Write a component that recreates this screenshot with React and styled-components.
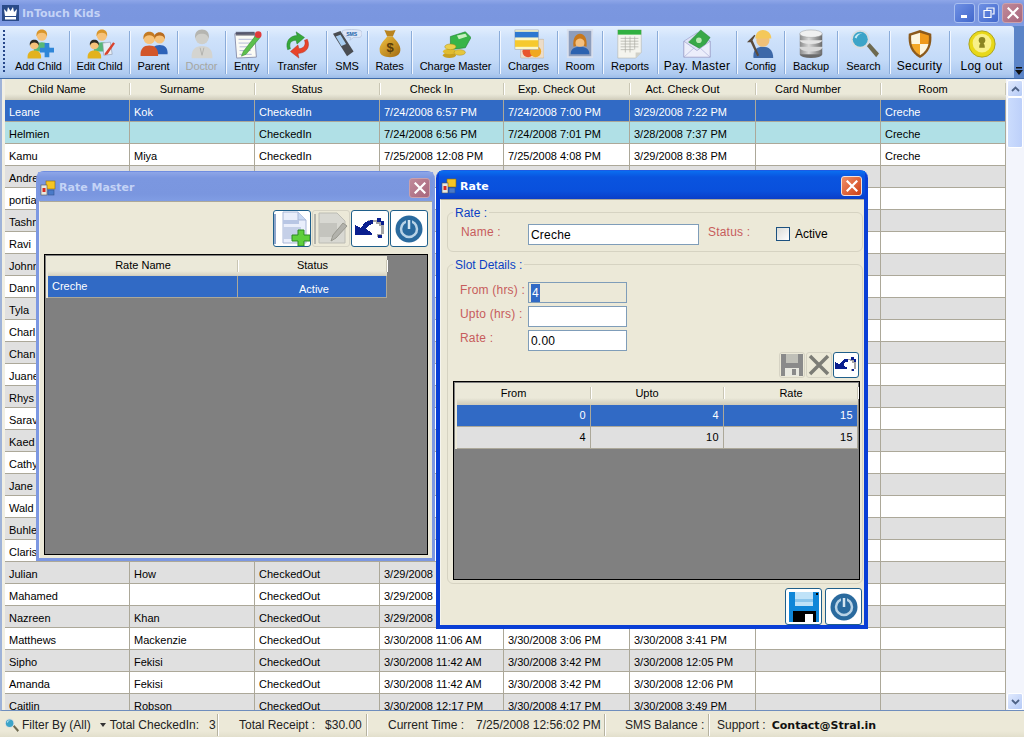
import React from 'react';
import styled, { createGlobalStyle } from 'styled-components';

const GlobalStyle = createGlobalStyle`
  html, body { margin: 0; padding: 0; background: #ece9d8; }
  * { box-sizing: border-box; }
  body { font-family: "Liberation Sans", Arial, sans-serif; font-size: 11px; color: #000; }
`;

const Screen = styled.div`
  position: relative;
  width: 1024px;
  height: 737px;
  overflow: hidden;
  display: flex;
  flex-direction: column;
  background: #dfe8f6;
`;

const TitleBar = styled.div`
  height: 26px;
  flex: none;
  display: flex;
  align-items: center;
  padding: 0 1px 0 2px;
  gap: 3px;
  background: linear-gradient(#8ea6e8 0, #7b97e0 5px, #7a96df 20px, #809de4 100%);
`;

const TitleText = styled.div`
  flex: 1;
  font-family: "DejaVu Sans", Verdana, sans-serif;
  font-weight: bold;
  font-size: 11px;
  color: ${p => (p.$active ? '#fff' : '#c4d3f6')};
`;

const CaptionButton = styled.div`
  width: 21px;
  height: 20px;
  flex: none;
  border: 1px solid ${p => (p.$close ? '#c9a0ac' : '#a9bff0')};
  border-radius: 3px;
  display: flex;
  align-items: center;
  justify-content: center;
  background: ${p => (p.$close ? 'linear-gradient(135deg,#c08a9a,#a8667c)' : 'linear-gradient(135deg,#6f90e4,#4268cc)')};
`;

const RedClose = styled(CaptionButton)`
  border-color: #f4e0d8;
  background: linear-gradient(135deg, #ef8f68, #cf3f14);
`;

const Toolbar = styled.div`
  height: 53px;
  flex: none;
  display: flex;
  background: #5b84c8;
  border-bottom: 1px solid #3f6ba8;
`;

const ToolStrip = styled.div`
  width: 1014px;
  display: flex;
  padding-left: 8px;
  position: relative;
  background: linear-gradient(#e3effe 0, #cfe2fb 12px, #c3daf8 34px, #aecaf0 48px, #9dbce8 100%);
  border-top-right-radius: 3px;
`;

const Grip = styled.div`
  width: 2px;
  margin: 4px 3px 5px -5px;
  background: repeating-linear-gradient(#27478a 0 2px, transparent 2px 4px);
`;

const ToolButton = styled.div`
  width: ${p => p.$w}px;
  height: 43px;
  margin-top: 5px;
  flex: none;
  display: flex;
  flex-direction: column;
  align-items: center;
  color: ${p => (p.$off ? '#a6a6a0' : '#000')};
  font-size: ${p => (p.$big ? 12 : 11)}px;
  letter-spacing: ${p => (p.$big ? '0.3px' : '-0.1px')};
  white-space: nowrap;
  border-right: 1px solid #8bacd9;
  box-shadow: 1px 0 0 #f2f7ff;
  & > svg { margin-top: -2px; flex: none; }
  & > span { line-height: 14px; }
`;

const LastTool = styled(ToolButton)`
  border-right: 0;
  box-shadow: none;
`;

const Chevron = styled.div`
  flex: 1;
  display: flex;
  flex-direction: column;
  align-items: center;
  justify-content: flex-end;
  padding-bottom: 2px;
`;

const Main = styled.div`
  flex: 1;
  min-height: 0;
  display: flex;
  padding-left: 3px;
  border-left: 2px solid #9fb3d8;
  background: #f1efe4;
  border-bottom: 1px solid #6f8ebd;
`;

const GridArea = styled.div`
  width: 1001px;
  overflow: hidden;
  background: #fff;
`;

const ROW_COLS = '125px 125px 125px 124px 126px 126px 125px 125px';

const HeadRow = styled.div`
  display: grid;
  width: fit-content;
  grid-template-columns: ${p => p.$cols};
  height: ${p => p.$h}px;
  background: linear-gradient(#ebe9d9 0, #ebe9d9 15px, #d9d6c6 19px, #cfcbb9 100%);
`;

const HeadCell = styled.div`
  height: 17px;
  line-height: ${p => p.$lh || 20}px;
  text-align: center;
  padding-right: ${p => p.$pad || 0}px;
  position: relative;
  &::after {
    content: '';
    position: absolute;
    right: 0;
    top: 4px;
    bottom: 1px;
    width: 1px;
    background: #c9c6b4;
    box-shadow: 1px 0 0 #fff;
  }
`;

const Row = styled.div`
  display: grid;
  width: fit-content;
  grid-template-columns: ${p => p.$cols};
  height: ${p => p.$h || 22}px;
  background: ${p => ({ sel: '#316ac5', aqua: '#b0e0e6', gray: '#e0e0e0', white: '#fff' }[p.$kind])};
  color: ${p => (p.$kind === 'sel' ? '#fff' : '#000')};
`;

const Cell = styled.div`
  border-right: 1px solid #aca899;
  border-bottom: 1px solid #aca899;
  padding: ${p => p.$pt ?? 3}px ${p => (p.$right ? 4 : 0)}px 0 ${p => (p.$right ? 0 : 4)}px;
  line-height: 19px;
  white-space: nowrap;
  overflow: hidden;
  text-align: ${p => (p.$right ? 'right' : p.$center ? 'center' : 'left')};
  letter-spacing: ${p => (p.$right ? '0.4px' : '0')};
`;

const Scrollbar = styled.div`
  flex: 1;
  display: flex;
  flex-direction: column;
  padding: 1px 1px 0;
  background: #f3f5fc;
`;

const ScrollButton = styled.div`
  height: 17px;
  flex: none;
  border: 1px solid #fff;
  border-radius: 2px;
  background: linear-gradient(135deg, #e1eafe, #b5caf6);
  display: flex;
  align-items: center;
  justify-content: center;
`;

const ScrollThumb = styled.div`
  height: 51px;
  flex: none;
  border: 1px solid #fff;
  border-radius: 2px;
  background: linear-gradient(90deg, #cbdcfd, #bdd0fa);
`;

const ScrollTrack = styled.div`
  flex: 1;
`;

const StatusBar = styled.div`
  height: 26px;
  flex: none;
  display: flex;
  align-items: center;
  padding-top: 2px;
  background: linear-gradient(#ece9d8 0, #ece9d8 20px, #e2dfcc 100%);
  font-size: 12px;
  color: #222;
  white-space: nowrap;
`;

const StatusItem = styled.div`
  width: ${p => p.$w}px;
  height: 22px;
  flex: none;
  display: flex;
  align-items: center;
  padding-left: ${p => p.$pad || 0}px;
  gap: ${p => p.$gap || 0}px;
  border-right: ${p => (p.$open ? '0' : '1px solid #b5b2a0')};
  box-shadow: ${p => (p.$open ? 'none' : '1px 0 0 #fff')};
`;

const FilterLabel = styled.span`
  margin-left: 3px;
`;

const FilterArrow = styled.svg`
  flex: none;
  margin: 0 4px 0 9px;
`;

const CheckedInCount = styled.span`
  margin-left: 10px;
`;

const ContactText = styled.b`
  font-family: "DejaVu Sans", Verdana, sans-serif;
  font-size: 11px;
  color: #111;
`;

const Win = styled.div`
  position: absolute;
  display: flex;
  flex-direction: column;
  border-radius: 8px 8px 0 0;
`;

const MasterWin = styled(Win)`
  left: 36px;
  top: 171px;
  width: 399px;
  height: 390px;
  padding: 0 3px 3px;
  background: #7d98e2;
  border-top: 1px solid #6f8de0;
`;

const RateWin = styled(Win)`
  left: 436px;
  top: 170px;
  width: 432px;
  height: 459px;
  padding: 0 4px 4px 4px;
  background: #0a3fd6;
  border-top: 1px solid #1a5ce6;
`;

const WinTitle = styled.div`
  height: ${p => p.$h}px;
  flex: none;
  display: flex;
  align-items: center;
  gap: 3px;
  padding: 2px 3px 0 2px;
  margin: 0 -1px;
  background: ${p => (p.$active
    ? 'linear-gradient(#0a6ef0 0, #0a54df 6px, #0950dc 20px, #0a3ec8 100%)'
    : 'linear-gradient(#8ea6e8 0, #7b97e0 6px, #7a96df 22px, #809de4 100%)')};
`;

const WinBody = styled.div`
  flex: 1;
  min-height: 0;
  display: flex;
  flex-direction: column;
  background: #ece9d8;
  border-top: 1px solid #aca899;
  border-left: 1px solid #f6f5ee;
`;

const ButtonRow = styled.div`
  display: flex;
  justify-content: flex-end;
  gap: ${p => p.$gap}px;
  margin: ${p => p.$m};
`;

const IconButton = styled.div`
  width: ${p => p.$w || 38}px;
  height: ${p => p.$h || 37}px;
  flex: none;
  display: flex;
  align-items: center;
  justify-content: center;
  border-radius: 3px;
  background: ${p => (p.$off ? '#ece9d8' : '#fff')};
  border: 1px solid ${p => (p.$off ? '#d6d3c4' : '#1f5f8b')};
`;

const DataGrid = styled.div`
  display: flex;
  flex-direction: column;
  background: #808080;
  border: 1px solid #000;
  padding: 1px 0 0 ${p => p.$left}px;
  margin: ${p => p.$m};
  height: ${p => p.$h}px;
  width: ${p => p.$w}px;
  flex: none;
  & > div { box-shadow: -2px 0 0 #ece9d8; }
`;

const Group = styled.div`
  position: relative;
  margin: ${p => p.$m};
  height: ${p => p.$h}px;
  flex: none;
  border: 1.5px solid #d6d3c2;
  border-radius: 6px;
`;

const Legend = styled.div`
  position: absolute;
  top: -7px;
  left: 5px;
  padding: 0 2px;
  background: #ece9d8;
  color: #0a3fc4;
  font-size: 12px;
  line-height: 14px;
`;

const NameRow = styled.div`
  display: grid;
  grid-template-columns: 67px 171px 77px 14px auto;
  align-items: center;
  padding: 10.5px 0 0 13px;
`;

const SlotForm = styled.div`
  display: grid;
  grid-template-columns: 67px 99px;
  grid-auto-rows: 21px;
  row-gap: 3px;
  align-items: center;
  padding: 16.5px 0 0 13px;
`;

const FieldLabel = styled.label`
  color: #c75c5c;
  font-size: 12px;
  margin-top: -5px;
  letter-spacing: 0.2px;
`;

const SlotLabel = styled(FieldLabel)`
  margin-left: -1px;
`;

const StatusLabel = styled(FieldLabel)`
  padding-left: 9px;
`;

const Field = styled.div`
  height: 21px;
  border: 1px solid #7f9db9;
  background: ${p => (p.$off ? '#ece9d8' : '#fff')};
  font-size: 12px;
  line-height: 20px;
  padding-left: 2px;
  letter-spacing: 0.2px;
`;

const Selected = styled.span`
  background: #316ac5;
  color: #fff;
  padding: 2px 1px;
`;

const Check = styled.div`
  width: 14px;
  height: 14px;
  border: 1px solid #1c5180;
  background: linear-gradient(135deg, #dcdcd7, #fff);
`;

const CheckText = styled.span`
  padding-left: 5px;
  font-size: 12px;
`;

const Person = ({ x, y, s = 1, shirt, hair, skin = '#f6c27a' }) => (
  <g transform={`translate(${x} ${y}) scale(${s})`}>
    <path d="M-8.5 17c-.5-7 3-10 8.500-10s9 3 8.500 10z" fill={shirt} />
    <circle r="5.500" fill={skin} />
    <path d="M-5.500 1c-1-5 2-7.500 5.500-7.500s6.500 2.500 5.500 7.500c-.8-3-2.800-4-5.500-4s-4.700 1-5.500 4z" fill={hair} />
  </g>
);

const Svg = ({ size = 30, children }) => (
  <svg width={size} height={size} viewBox="0 0 32 32">{children}</svg>
);

const AddChildIcon = () => (
  <Svg>
    <Person x={19} y={7} shirt="#58b878" hair="#d9962c" />
    <Person x={11} y={17} s={0.85} shirt="#e2b21e" hair="#2b2a22" />
    <path d="M22 15h5v5h5v5h-5v5h-5v-5h-5v-5h5z" fill="#2f86d8" />
  </Svg>
);

const EditChildIcon = () => (
  <Svg>
    <Person x={18} y={7} shirt="#58b878" hair="#d9962c" />
    <Person x={10} y={17} s={0.85} shirt="#e2b21e" hair="#2b2a22" />
    <path d="M19 15l8-1 2 13-9 1z" fill="#e8eef5" stroke="#8a94a8" strokeWidth=".6" />
    <path d="M21 26l9-12 2 1.500-8 11.500-3 1z" fill="#d8432e" />
  </Svg>
);

const ParentIcon = () => (
  <Svg>
    <Person x={22} y={10} shirt="#2d62b8" hair="#b86c20" />
    <Person x={11} y={10} s={1.1} shirt="#d2562a" hair="#c47a22" />
  </Svg>
);

const DoctorIcon = () => (
  <Svg>
    <Person x={16} y={9} s={1.3} shirt="#d4d4d0" hair="#b5b5b0" skin="#cfcfca" />
    <path d="M14 20l2 8 2-8" fill="none" stroke="#b0b0ac" />
  </Svg>
);

const EntryIcon = () => (
  <Svg>
    <path d="M3 5l21-1 2 26-21 1z" fill="#fbfbf5" stroke="#8a90ad" />
    <path d="M7 11h15M7 15h15M8 19h14M8 23h12M8 27h13" stroke="#b0b8d8" />
    <path d="M4 3h20v4h-20z" fill="#3c3c50" opacity=".75" />
    <path d="M12 24l14-18 4 3-15 18-5 2z" fill="#5cc04c" stroke="#2e7a2a" strokeWidth=".5" />
    <circle cx="28" cy="6" r="3.500" fill="#e03a3a" />
  </Svg>
);

const TransferIcon = () => (
  <Svg>
    <path d="M6 22c-3-9 3-15 10-15l-1-4 9 6-8 7-1-4c-5 0-8 3-6 9z" fill="#36a83a" stroke="#1f7a2b" strokeWidth=".5" />
    <path d="M27 11c4 9-2 15-10 15l1 5-9-7 8-7 1 4c5 0 8-4 6-9z" fill="#e8432a" stroke="#b02a18" strokeWidth=".5" />
  </Svg>
);

const SmsIcon = () => (
  <Svg>
    <path d="M1 5l8-3 14 22-7 5z" fill="#4a4d52" />
    <path d="M4 8l5-2 6 10-5 2z" fill="#a8cdf0" />
    <path d="M11 2c3-2 17-2 20 0 2 2 1 7-2 7h-6l-4 3 1-3c-5 0-10-3-9-7z" fill="#dfe7f7" stroke="#9fb0d0" strokeWidth=".5" />
    <text x="21" y="7" textAnchor="middle" fontSize="5.500" fontWeight="bold" fill="#2262a8" fontFamily="Liberation Sans">SMS</text>
  </Svg>
);

const RatesIcon = () => (
  <Svg>
    <path d="M10 1c3 1 8 1 12 0l-3 7h-6z" fill="#b98420" />
    <path d="M13 8h6c3 4 9 9 8 15-.5 5-5 7-11 7s-11-2-11-7c-1-6 5-11 8-15z" fill="url(#gold)" />
    <text x="16" y="25" textAnchor="middle" fontSize="14" fontWeight="bold" fill="#5a3c08" fontFamily="Liberation Sans">$</text>
  </Svg>
);

const ChargeMasterIcon = () => (
  <Svg>
    <path d="M10 8l16-5 6 6-6 11-16 2z" fill="#38b448" stroke="#1c7a2c" strokeWidth=".6" />
    <path d="M17 7l9-2 2 3-9 3z" fill="#c8f0c0" />
    <ellipse cx="9" cy="28" rx="7" ry="3" fill="#c8a020" />
    <ellipse cx="9" cy="24" rx="7" ry="3" fill="#e0bc30" />
    <ellipse cx="10" cy="19" rx="6" ry="3" fill="#eccf4a" stroke="#a88a18" strokeWidth=".5" />
    <ellipse cx="20" cy="25" rx="6" ry="3" fill="#e6c63c" stroke="#a88a18" strokeWidth=".5" />
  </Svg>
);

const ChargesIcon = () => (
  <Svg>
    <rect x="7" y="11" width="25" height="20" rx="1" fill="#ecdcc8" stroke="#b8a890" strokeWidth=".5" />
    <circle cx="15" cy="24" r="6" fill="#e8562c" />
    <circle cx="23" cy="24" r="6" fill="#f0a820" />
    <rect x="1" y="1" width="25" height="21" fill="#fbf6c8" stroke="#8a94b0" strokeWidth=".5" />
    <rect x="1" y="3" width="25" height="6" fill="#2e78d0" />
    <rect x="1" y="12" width="25" height="7" fill="#f6c92e" />
  </Svg>
);

const RoomIcon = () => (
  <Svg>
    <rect x="3" y="1" width="26" height="29" fill="#8d9dbc" stroke="#d8dfee" strokeWidth="2" />
    <path d="M6 27c0-6 4-8 10-8s10 2 10 8z" fill="#2c62b0" />
    <circle cx="16" cy="13" r="6" fill="#f4c080" />
    <path d="M9 19c-1-10 3-14 7-14s8 4 7 14l-3-1c2-4 0-8-4-8s-6 4-4 8z" fill="#c8781c" />
  </Svg>
);

const ReportsIcon = () => (
  <Svg>
    <path d="M3 1h25v24l-6 6H3z" fill="#f4f4ee" stroke="#b0b0a8" strokeWidth=".6" />
    <rect x="3" y="1" width="25" height="5" fill="#30b040" />
    <path d="M6 10h19M6 13h19M6 16h19M6 19h19M6 22h14M11 8v17M16 8v17M21 8v14" stroke="#a8a8a0" strokeWidth=".7" />
    <path d="M28 25l-6 6v-6z" fill="#d0d0c8" />
  </Svg>
);

const PayMasterIcon = () => (
  <Svg>
    <path d="M2 13l14-9 14 9v17H2z" fill="#dfe2f6" stroke="#8e93c0" strokeWidth=".6" />
    <path d="M7 14L20 1l10 8-9 13z" fill="#38a848" stroke="#1c7a2c" strokeWidth=".5" />
    <circle cx="18" cy="12" r="3" fill="#b8e8b0" />
    <path d="M2 13l14 10 14-10v17H2z" fill="#eceefb" stroke="#8e93c0" strokeWidth=".6" />
    <path d="M2 30l11-10M30 30L19 20" stroke="#a8acd4" strokeWidth=".7" />
  </Svg>
);

const ConfigIcon = () => (
  <Svg>
    <path d="M8 31c-1-9 4-12 10-12s11 3 11 12z" fill="#3d68a8" />
    <circle cx="18" cy="12" r="7" fill="#f0c078" />
    <path d="M10 10c0-6 4-9 8-9s9 3 9 9z" fill="#f4c85a" />
    <path d="M1 14l8-8 1 1-3 5 7 16-2 1-7-15z" fill="#5a4a3a" />
  </Svg>
);

const BackupIcon = () => (
  <Svg>
    <ellipse cx="16" cy="27" rx="12" ry="4" fill="#6a6a6a" />
    <rect x="4" y="20" width="24" height="7" fill="url(#silver)" />
    <ellipse cx="16" cy="20" rx="12" ry="4" fill="#d8d8d8" />
    <rect x="4" y="12" width="24" height="7" fill="url(#silver)" />
    <ellipse cx="16" cy="12" rx="12" ry="4" fill="#e4e4e4" />
    <rect x="4" y="5" width="24" height="7" fill="url(#silver)" />
    <ellipse cx="16" cy="5" rx="12" ry="4" fill="#f0f0f0" stroke="#9a9a9a" strokeWidth=".5" />
  </Svg>
);

const SearchGlass = ({ size }) => (
  <Svg size={size}>
    <path d="M19 18l3-3 10 11-3 4z" fill="#6e6a50" />
    <circle cx="12" cy="11" r="10" fill="#d8dde0" />
    <circle cx="12" cy="11" r="8" fill="#3ca4c8" />
    <path d="M6 9c1-3 4-5 8-4-3 0-5 2-6 5z" fill="#c8ecf6" />
  </Svg>
);

const SecurityIcon = () => (
  <Svg>
    <path d="M16 1l12 4c1 12-2 20-12 26C6 25 3 17 4 5z" fill="#8c5a1c" />
    <path d="M16 4v12H7c-.5-3-.6-6-.5-9z" fill="#fdf6e0" />
    <path d="M16 4l9.500 3c.1 3 0 6-.5 9h-9z" fill="#f09a1c" />
    <path d="M7 16h9v12c-5-3-8-7-9-12z" fill="#f4a828" />
    <path d="M16 16h9c-1 5-4 9-9 12z" fill="#fdf6e0" />
  </Svg>
);

const LogoutIcon = () => (
  <Svg>
    <circle cx="16" cy="16" r="14" fill="#e8d818" stroke="#a8a020" />
    <circle cx="16" cy="15" r="10" fill="#f8f088" />
    <circle cx="16" cy="12" r="3.500" fill="#8a8420" />
    <path d="M13 20c0-3 1-6 3-6s3 3 3 6z" fill="#8a8420" />
  </Svg>
);

const AppSquares = () => (
  <svg width="16" height="16" viewBox="0 0 16 16">
    <rect x="6" y="1" width="9" height="8" fill="#f6c522" stroke="#8a6a10" strokeWidth=".6" />
    <rect x="1" y="5" width="6" height="10" fill="#e8e8e0" stroke="#555" strokeWidth=".6" />
    <rect x="2.500" y="8" width="3" height="4" fill="#d82a20" />
    <rect x="8" y="10" width="6" height="5" fill="#4a7ac8" stroke="#33558f" strokeWidth=".6" />
  </svg>
);

const Crown = () => (
  <svg width="17" height="16" viewBox="0 0 17 16">
    <rect width="17" height="16" fill="#2a4a88" />
    <path d="M2 4l3 3 1-5 2.500 4L11 2l1 5 3-3-1 7H3z" fill="#fff" />
    <rect x="3" y="12" width="11" height="2.500" fill="#fff" />
  </svg>
);

const XGlyph = () => (
  <svg width="12" height="12" viewBox="0 0 12 12">
    <path d="M1.500 1.500l9 9M10.500 1.500l-9 9" stroke="#fff" strokeWidth="2.200" strokeLinecap="square" />
  </svg>
);

const MinGlyph = () => (
  <svg width="12" height="12" viewBox="0 0 12 12"><rect x="2" y="8" width="6" height="3" fill="#fff" /></svg>
);

const MaxGlyph = () => (
  <svg width="12" height="12" viewBox="0 0 12 12">
    <path d="M4 3V1h7v6H9M1 3.500h7v7H1z" fill="none" stroke="#fff" strokeWidth="1.200" />
  </svg>
);

const NewDocIcon = () => (
  <svg width="36" height="35" viewBox="0 0 36 35">
    <path d="M9 1h15l8 8v23H9z" fill="#e9eefb" stroke="#a9b8d8" />
    <path d="M24 1v8h8" fill="#c8d8f2" stroke="#a9b8d8" />
    <rect x="9" y="9" width="16" height="4" fill="#b8c6e4" />
    <rect x="9" y="16" width="18" height="12" fill="#c5d0e8" />
    <path d="M1 3v30" stroke="#8ea6cc" strokeWidth="2" />
    <path d="M24 19h6v5h6v6h-6v5h-6v-5h-6v-6h6z" fill="#5fcf3c" stroke="#2c8a22" />
  </svg>
);

const EditDocIcon = () => (
  <svg width="36" height="35" viewBox="0 0 36 35">
    <path d="M6 2h18l8 8v22H6z" fill="#d8d8d2" stroke="#bcbcb4" />
    <rect x="6" y="12" width="18" height="14" fill="#c4c4be" />
    <path d="M2 3v30" stroke="#b5b5ae" strokeWidth="2" />
    <path d="M18 30l2-6 10-12 4 3-11 12z" fill="#b2b2ac" stroke="#98988f" />
  </svg>
);

const UndoIcon = ({ size = 34 }) => (
  <svg width={size} height={size} viewBox="0 0 34 34" shapeRendering="crispEdges">
    <path d="M15 8h11v2h3v2h2v10h-2v3h-5v-3h4v-8h-2v-2h-3v-2H15z" fill="#a5a5a5" />
    <path d="M2 13l6 3c2-4 6-8 12-8v4c-3 0-5 2-7 5l6 4v2H2z" fill="#0a1f8f" />
    <path d="M24 6h4v3h3v4h-3v-3h-4zM25 23h4v3h-4z" fill="#0a1f8f" />
  </svg>
);

const PowerIcon = () => (
  <svg width="28" height="28" viewBox="0 0 28 28">
    <circle cx="14" cy="14" r="13.500" fill="#2a6a9e" />
    <circle cx="14" cy="14" r="8" fill="none" stroke="#b9d3e6" strokeWidth="2.500" />
    <path d="M14 4v10" stroke="#2a6a9e" strokeWidth="6" />
    <path d="M14 5v9" stroke="#d4e5f0" strokeWidth="2.500" />
  </svg>
);

const FloppyIcon = () => (
  <svg width="32" height="32" viewBox="0 0 32 32">
    <path d="M1 1h30v30H1z" fill="#0f86d8" />
    <rect x="7" y="1" width="18" height="14" fill="#bfe2f8" />
    <rect x="7" y="8" width="18" height="3" fill="#8cc6ec" />
    <rect x="28" y="2" width="2" height="2" fill="#000" />
    <rect x="5" y="20" width="23" height="11" fill="#000" />
    <rect x="17" y="23" width="8" height="8" fill="#fff" />
  </svg>
);

const GrayFloppy = () => (
  <svg width="22" height="22" viewBox="0 0 22 22">
    <path d="M0 0h22v22H0z" fill="#8a8a8a" />
    <rect x="5" y="0" width="12" height="9" fill="#c0c0b8" />
    <rect x="4" y="14" width="14" height="8" fill="#e8e8e0" />
    <rect x="11" y="15" width="4" height="6" fill="#8a8a8a" />
  </svg>
);

const GrayX = () => (
  <svg width="24" height="24" viewBox="0 0 24 24">
    <path d="M3 3l18 18M21 3L3 21" stroke="#7c7c76" strokeWidth="3.500" />
  </svg>
);

const Caret = ({ up, color = '#4d6185' }) => (
  <svg width="9" height="6" viewBox="0 0 9 6">
    <path d={up ? 'M1 5l3.500-3.500L8 5' : 'M1 1l3.500 3.500L8 1'} fill="none" stroke={color} strokeWidth="1.800" />
  </svg>
);

const tools = [
  { label: 'Add Child', w: 62, Icon: AddChildIcon },
  { label: 'Edit Child', w: 60, Icon: EditChildIcon },
  { label: 'Parent', w: 48, Icon: ParentIcon },
  { label: 'Doctor', w: 48, Icon: DoctorIcon, off: true },
  { label: 'Entry', w: 42, Icon: EntryIcon },
  { label: 'Transfer', w: 59, Icon: TransferIcon },
  { label: 'SMS', w: 41, Icon: SmsIcon },
  { label: 'Rates', w: 44, Icon: RatesIcon },
  { label: 'Charge Master', w: 88, Icon: ChargeMasterIcon },
  { label: 'Charges', w: 58, Icon: ChargesIcon },
  { label: 'Room', w: 45, Icon: RoomIcon },
  { label: 'Reports', w: 55, Icon: ReportsIcon },
  { label: 'Pay. Master', w: 79, Icon: PayMasterIcon, big: true },
  { label: 'Config', w: 48, Icon: ConfigIcon },
  { label: 'Backup', w: 53, Icon: BackupIcon },
  { label: 'Search', w: 52, Icon: SearchGlass },
  { label: 'Security', w: 60, Icon: SecurityIcon, big: true },
];

const columns = ['Child Name', 'Surname', 'Status', 'Check In', 'Exp. Check Out', 'Act. Check Out', 'Card Number', 'Room'];

const rows = [
  ['Leane', 'Kok', 'CheckedIn', '7/24/2008 6:57 PM', '7/24/2008 7:00 PM', '3/29/2008 7:22 PM', '', 'Creche'],
  ['Helmien', '', 'CheckedIn', '7/24/2008 6:56 PM', '7/24/2008 7:01 PM', '3/28/2008 7:37 PM', '', 'Creche'],
  ['Kamu', 'Miya', 'CheckedIn', '7/25/2008 12:08 PM', '7/25/2008 4:08 PM', '3/29/2008 8:38 PM', '', 'Creche'],
  ...['Andre', 'portia', 'Tashn', 'Ravi', 'Johnn', 'Dann', 'Tyla', 'Charl', 'Chan', 'Juane', 'Rhys', 'Sarav', 'Kaed', 'Cathy', 'Jane', 'Wald', 'Buhle', 'Claris']
    .map(name => [name, '', '', '', '', '', '', '']),
  ['Julian', 'How', 'CheckedOut', '3/29/2008', '', '', '', ''],
  ['Mahamed', '', 'CheckedOut', '3/29/2008', '', '', '', ''],
  ['Nazreen', 'Khan', 'CheckedOut', '3/29/2008', '', '', '', ''],
  ['Matthews', 'Mackenzie', 'CheckedOut', '3/30/2008 11:06 AM', '3/30/2008 3:06 PM', '3/30/2008 3:41 PM', '', ''],
  ['Sipho', 'Fekisi', 'CheckedOut', '3/30/2008 11:42 AM', '3/30/2008 3:42 PM', '3/30/2008 12:05 PM', '', ''],
  ['Amanda', 'Fekisi', 'CheckedOut', '3/30/2008 11:42 AM', '3/30/2008 3:42 PM', '3/30/2008 12:06 PM', '', ''],
  ['Caitlin', 'Robson', 'CheckedOut', '3/30/2008 12:17 PM', '3/30/2008 4:17 PM', '3/30/2008 3:49 PM', '', ''],
];

const rowKind = i => {
  if (i === 0) return 'sel';
  if (i === 1) return 'aqua';
  return i % 2 ? 'gray' : 'white';
};

const MASTER_COLS = '190px 149px';

function RateMaster() {
  return (
    <MasterWin>
      <WinTitle $h={29}>
        <AppSquares />
        <TitleText>Rate Master</TitleText>
        <CaptionButton $close><XGlyph /></CaptionButton>
      </WinTitle>
      <WinBody>
        <ButtonRow $gap={1} $m="8px 4px 7px 0">
          <IconButton><NewDocIcon /></IconButton>
          <IconButton $off><EditDocIcon /></IconButton>
          <IconButton><UndoIcon /></IconButton>
          <IconButton><PowerIcon /></IconButton>
        </ButtonRow>
        <DataGrid $left={3} $m="0 0 0 4px" $w={384} $h={301}>
          <HeadRow $cols={MASTER_COLS} $h={20}>
            <HeadCell $lh={19}>Rate Name</HeadCell>
            <HeadCell $lh={19}>Status</HeadCell>
          </HeadRow>
          <Row $cols={MASTER_COLS} $kind="sel">
            <Cell $pt={1}>Creche</Cell>
            <Cell $center $pt={4}>Active</Cell>
          </Row>
        </DataGrid>
      </WinBody>
    </MasterWin>
  );
}

const slots = [
  { from: 0, upto: 4, rate: 15, kind: 'sel' },
  { from: 4, upto: 10, rate: 15, kind: 'gray' },
];

const SLOT_COLS = '134px 133px 134px';

function RateForm() {
  return (
    <RateWin>
      <WinTitle $active $h={28}>
        <AppSquares />
        <TitleText $active>Rate</TitleText>
        <RedClose><XGlyph /></RedClose>
      </WinTitle>
      <WinBody>
        <Group $m="12px 1px 0 6px" $h={40}>
          <Legend>Rate :</Legend>
          <NameRow>
            <FieldLabel>Name :</FieldLabel>
            <Field>Creche</Field>
            <StatusLabel>Status :</StatusLabel>
            <Check />
            <CheckText>Active</CheckText>
          </NameRow>
        </Group>
        <Group $m="12px 1px 0 6px" $h={320}>
          <Legend>Slot Details :</Legend>
          <SlotForm>
            <SlotLabel>From (hrs) :</SlotLabel>
            <Field $off><Selected>4</Selected></Field>
            <SlotLabel>Upto (hrs) :</SlotLabel>
            <Field />
            <SlotLabel>Rate :</SlotLabel>
            <Field>0.00</Field>
          </SlotForm>
          <ButtonRow $gap={1} $m="1px 3px 3px 0">
            <IconButton $off $w={26} $h={26}><GrayFloppy /></IconButton>
            <IconButton $off $w={26} $h={26}><GrayX /></IconButton>
            <IconButton $w={26} $h={26}><UndoIcon size={24} /></IconButton>
          </ButtonRow>
          <DataGrid $left={3} $m="0 0 0 5px" $w={407} $h={199}>
            <HeadRow $cols={SLOT_COLS} $h={22}>
              <HeadCell $pad={21}>From</HeadCell>
              <HeadCell $pad={21}>Upto</HeadCell>
              <HeadCell>Rate</HeadCell>
            </HeadRow>
            {slots.map(s => (
              <Row key={s.from} $cols={SLOT_COLS} $kind={s.kind}>
                <Cell $right $pt={1}>{s.from}</Cell>
                <Cell $right $pt={1}>{s.upto}</Cell>
                <Cell $right $pt={1}>{s.rate}</Cell>
              </Row>
            ))}
          </DataGrid>
        </Group>
        <ButtonRow $gap={3} $m="4px 2px 0 0">
          <IconButton $w={37}><FloppyIcon /></IconButton>
          <IconButton $w={37}><PowerIcon /></IconButton>
        </ButtonRow>
      </WinBody>
    </RateWin>
  );
}

export default function App() {
  return (
    <Screen>
      <GlobalStyle />
      <svg width="0" height="0" style={{ position: 'absolute' }}>
        <defs>
          <linearGradient id="gold" x1="0" y1="0" x2="1" y2="1">
            <stop offset="0" stopColor="#f0c040" />
            <stop offset="1" stopColor="#a06a10" />
          </linearGradient>
          <linearGradient id="silver" x1="0" y1="0" x2="1" y2="0">
            <stop offset="0" stopColor="#8a8a8a" />
            <stop offset=".4" stopColor="#d8d8d8" />
            <stop offset="1" stopColor="#6a6a6a" />
          </linearGradient>
        </defs>
      </svg>

      <TitleBar>
        <Crown />
        <TitleText>InTouch Kids</TitleText>
        <CaptionButton><MinGlyph /></CaptionButton>
        <CaptionButton><MaxGlyph /></CaptionButton>
        <CaptionButton $close><XGlyph /></CaptionButton>
      </TitleBar>

      <Toolbar>
        <ToolStrip>
          <Grip />
          {tools.map(({ label, w, Icon, off, big }) => (
            <ToolButton key={label} $w={w} $off={off} $big={big}>
              <Icon />
              <span>{label}</span>
            </ToolButton>
          ))}
          <LastTool $w={63} $big>
            <LogoutIcon />
            <span>Log out</span>
          </LastTool>
        </ToolStrip>
        <Chevron>
          <svg width="8" height="9" viewBox="0 0 8 9">
            <rect x="1" y="0" width="6" height="1.500" fill="#111" />
            <path d="M0 3h8L4 8z" fill="#111" />
          </svg>
        </Chevron>
      </Toolbar>

      <Main>
        <GridArea>
          <HeadRow $cols={ROW_COLS} $h={21}>
            {columns.map(c => <HeadCell key={c} $pad={21}>{c}</HeadCell>)}
          </HeadRow>
          {rows.map((r, i) => (
            <Row key={i} $cols={ROW_COLS} $kind={rowKind(i)}>
              {r.map((v, j) => <Cell key={j}>{v}</Cell>)}
            </Row>
          ))}
        </GridArea>
        <Scrollbar>
          <ScrollButton><Caret up /></ScrollButton>
          <ScrollThumb />
          <ScrollTrack />
          <ScrollButton><Caret /></ScrollButton>
        </Scrollbar>
      </Main>

      <StatusBar>
        <StatusItem $w={218} $pad={4}>
          <SearchGlass size={15} />
          <FilterLabel>Filter By (All)</FilterLabel>
          <FilterArrow width="6" height="4" viewBox="0 0 6 4"><path d="M0 0h6L3 4z" fill="#333" /></FilterArrow>
          <span>Total CheckedIn:</span>
          <CheckedInCount>3</CheckedInCount>
        </StatusItem>
        <StatusItem $w={149} $pad={21} $gap={10}>
          <span>Total Receipt :</span>
          <span>$30.00</span>
        </StatusItem>
        <StatusItem $w={238} $pad={21} $gap={12}>
          <span>Current Time :</span>
          <span>7/25/2008 12:56:02 PM</span>
        </StatusItem>
        <StatusItem $w={104} $pad={20}>
          <span>SMS Balance :</span>
        </StatusItem>
        <StatusItem $w={200} $pad={8} $gap={6} $open>
          <span>Support :</span>
          <ContactText>Contact@Stral.in</ContactText>
        </StatusItem>
      </StatusBar>

      <RateMaster />
      <RateForm />
    </Screen>
  );
}
